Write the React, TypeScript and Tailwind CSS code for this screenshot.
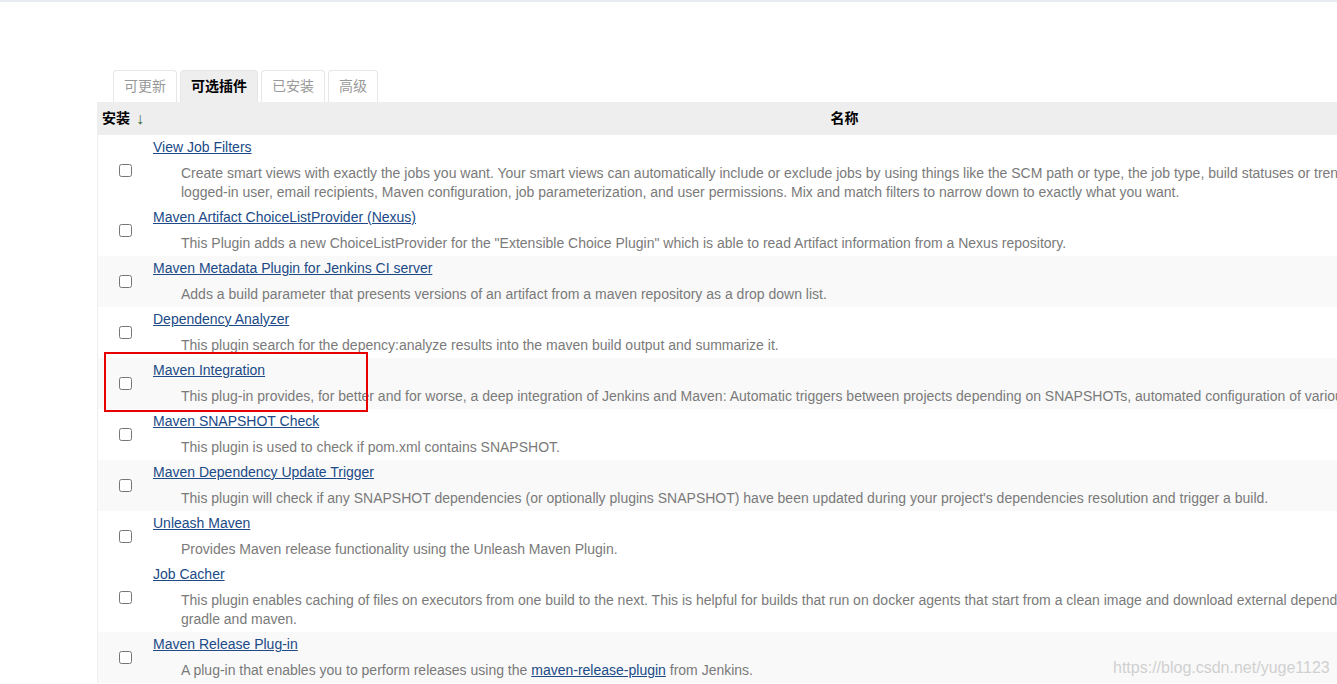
import React from 'react';

type Plugin = {
    name: string;
    lines: React.ReactNode[];
    gray?: boolean;
};

const plugins: Plugin[] = [
    {
        name: 'View Job Filters',
        lines: [
            'Create smart views with exactly the jobs you want. Your smart views can automatically include or exclude jobs by using things like the SCM path or type, the job type, build statuses or trends, triggering cause, build parameters,',
            'logged-in user, email recipients, Maven configuration, job parameterization, and user permissions. Mix and match filters to narrow down to exactly what you want.',
        ],
    },
    {
        name: 'Maven Artifact ChoiceListProvider (Nexus)',
        lines: ['This Plugin adds a new ChoiceListProvider for the "Extensible Choice Plugin" which is able to read Artifact information from a Nexus repository.'],
    },
    {
        name: 'Maven Metadata Plugin for Jenkins CI server',
        lines: ['Adds a build parameter that presents versions of an artifact from a maven repository as a drop down list.'],
        gray: true,
    },
    {
        name: 'Dependency Analyzer',
        lines: ['This plugin search for the depency:analyze results into the maven build output and summarize it.'],
    },
    {
        name: 'Maven Integration',
        lines: ['This plug-in provides, for better and for worse, a deep integration of Jenkins and Maven: Automatic triggers between projects depending on SNAPSHOTs, automated configuration of various Jenkins publishers such as Junit.'],
        gray: true,
    },
    {
        name: 'Maven SNAPSHOT Check',
        lines: ['This plugin is used to check if pom.xml contains SNAPSHOT.'],
    },
    {
        name: 'Maven Dependency Update Trigger',
        lines: ["This plugin will check if any SNAPSHOT dependencies (or optionally plugins SNAPSHOT) have been updated during your project's dependencies resolution and trigger a build."],
        gray: true,
    },
    {
        name: 'Unleash Maven',
        lines: ['Provides Maven release functionality using the Unleash Maven Plugin.'],
    },
    {
        name: 'Job Cacher',
        lines: [
            'This plugin enables caching of files on executors from one build to the next. This is helpful for builds that run on docker agents that start from a clean image and download external dependencies like npm,',
            'gradle and maven.',
        ],
    },
    {
        name: 'Maven Release Plug-in',
        lines: [
            <>
                A plug-in that enables you to perform releases using the{' '}
                <a href="#" className="text-[#204a87] underline">maven-release-plugin</a> from Jenkins.
            </>,
        ],
        gray: true,
    },
];

const tabs = [
    { label: '可更新', active: false },
    { label: '可选插件', active: true },
    { label: '已安装', active: false },
    { label: '高级', active: false },
];

const font = "font-['Liberation_Sans','Noto_Sans_CJK_SC',sans-serif]";

function PluginRow({ plugin }: { plugin: Plugin }) {
    return (
        <div className={`flex ${plugin.gray ? 'bg-[#f9f9f9]' : 'bg-white'}`}>
            <div className="w-[55px] shrink-0 flex items-center justify-center">
                <input type="checkbox" className="w-[13px] h-[13px] m-0" />
            </div>
            <div className="flex-1 pt-[3px] pb-[3px]">
                <div className="leading-[19px]">
                    <a href="#" className="text-[#204a87] underline">{plugin.name}</a>
                </div>
                <div className="mt-[7px] pl-[28px] text-[#7a7a7a] leading-[19px] whitespace-nowrap">
                    {plugin.lines.map((line, i) => (
                        <div key={i}>{line}</div>
                    ))}
                </div>
            </div>
        </div>
    );
}

export default function App() {
    return (
        <div className={`relative w-full h-[684px] overflow-hidden bg-white text-[14px] ${font}`}>
            <div className="h-[2px] bg-[#e8ecf0]" />

            <div className="pl-[97px] pt-[68px]">
                {/* tabs */}
                <div className="flex gap-[3px] pl-[16px]">
                    {tabs.map((t) => (
                        <div
                            key={t.label}
                            className={`h-[32px] px-[10px] flex items-center border border-b-0 border-[#e6e6e6] rounded-t-[4px] ${
                                t.active ? 'bg-[#eeeeee] text-black font-bold' : 'bg-white text-[#999]'
                            }`}
                        >
                            {t.label}
                        </div>
                    ))}
                </div>

                {/* table */}
                <div className="w-[1439px] border-l border-[#eeeeee]">
                    <div className="flex h-[33px] bg-[#eeeeee] font-bold text-black items-center">
                        <div className="w-[55px] shrink-0 pl-[4px] flex items-center gap-[6px]">
                            <span>安装</span>
                            <span className="font-normal text-[16px] leading-none text-[#3b6b3b]">↓</span>
                        </div>
                        <div className="flex-1 text-center">名称</div>
                    </div>
                    {plugins.map((p) => (
                        <PluginRow key={p.name} plugin={p} />
                    ))}
                </div>
            </div>

            {/* highlight box */}
            <div className="absolute left-[104px] top-[352px] w-[264px] h-[60px] border-2 border-[#e60000]" />

            {/* watermark */}
            <div className="absolute left-[1113px] top-[656px] text-[16px] text-[#d0d0d0] font-['Liberation_Sans',sans-serif]">
                https://blog.csdn.net/yuge1123
            </div>
        </div>
    );
}
